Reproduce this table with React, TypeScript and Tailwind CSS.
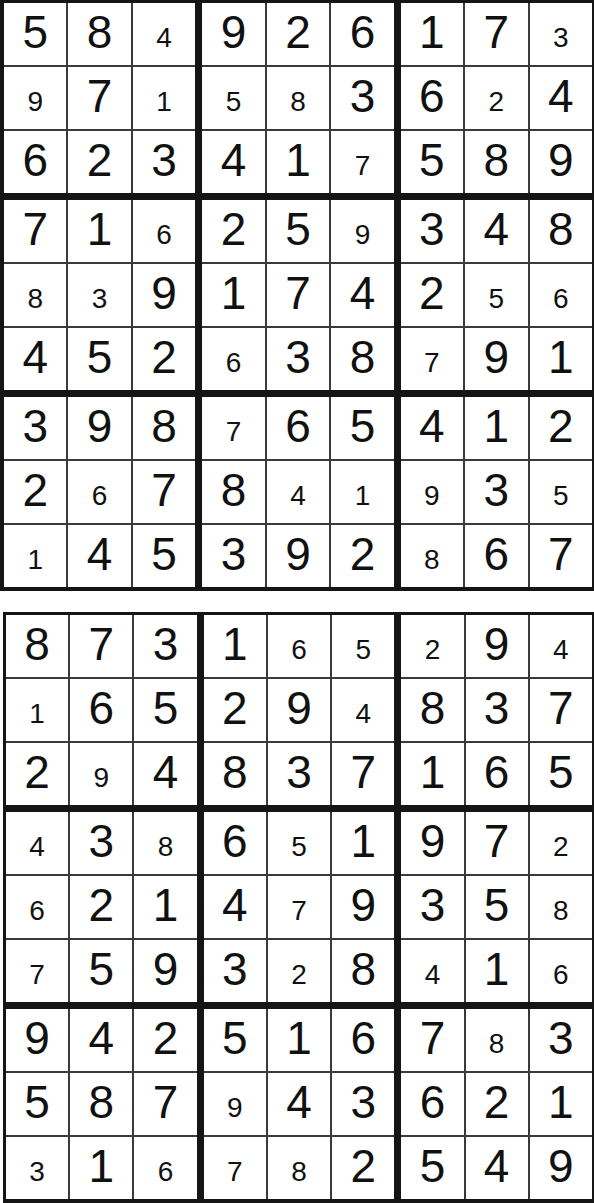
const puzzleA = [
  '5 8 4s 9 2 6 1 7 3s',
  '9s 7 1s 5s 8s 3 6 2s 4',
  '6 2 3 4 1 7s 5 8 9',
  '7 1 6s 2 5 9s 3 4 8',
  '8s 3s 9 1 7 4 2 5s 6s',
  '4 5 2 6s 3 8 7s 9 1',
  '3 9 8 7s 6 5 4 1 2',
  '2 6s 7 8 4s 1s 9s 3 5s',
  '1s 4 5 3 9 2 8s 6 7',
];

const puzzleB = [
  '8 7 3 1 6s 5s 2s 9 4s',
  '1s 6 5 2 9 4s 8 3 7',
  '2 9s 4 8 3 7 1 6 5',
  '4s 3 8s 6 5s 1 9 7 2s',
  '6s 2 1 4 7s 9 3 5 8s',
  '7s 5 9 3 2s 8 4s 1 6s',
  '9 4 2 5 1 6 7 8s 3',
  '5 8 7 9s 4 3 6 2 1',
  '3s 1 6s 7s 8s 2 5 4 9',
];

const parse = (rows: string[]) => rows.map((r) => r.split(' '));

const Cell = ({ token }: { token: string }) => {
  const small = token.endsWith('s');
  const digit = token[0];
  return (
    <div className="bg-white text-center text-[#111]">
      {small ? (
        <div className="pt-[21px] text-[28px] leading-none">{digit}</div>
      ) : (
        <div className="pt-[6px] text-[46px] leading-none">{digit}</div>
      )}
    </div>
  );
};

const Board = ({ rows, className }: { rows: string[]; className: string }) => {
  const grid = parse(rows);
  return (
    <div
      className={`grid h-[591px] grid-cols-3 grid-rows-3 gap-[7px] bg-[#151515] ${className}`}>
      {Array.from({ length: 9 }).map((_, b) => (
        <div
          key={b}
          className="grid grid-cols-3 grid-rows-3 gap-[2px] bg-[#3a3a3a]">
          {Array.from({ length: 9 }).map((_, c) => {
            const r = Math.floor(b / 3) * 3 + Math.floor(c / 3);
            const col = (b % 3) * 3 + (c % 3);
            return <Cell key={c} token={grid[r][col]} />;
          })}
        </div>
      ))}
    </div>
  );
};

export default function App() {
  return (
    <div className="h-[1203px] w-[594px] overflow-hidden bg-white font-['Liberation_Sans',Arial,sans-serif]">
      <Board rows={puzzleA} className="w-[594px] pt-[3px] pr-[2px] pb-[4px] pl-[4px]" />
      <div className="h-[21px]" />
      <Board rows={puzzleB} className="ml-[3px] w-[591px] pt-[3px] pr-[2px] pb-[4px] pl-[3px]" />
    </div>
  );
}
